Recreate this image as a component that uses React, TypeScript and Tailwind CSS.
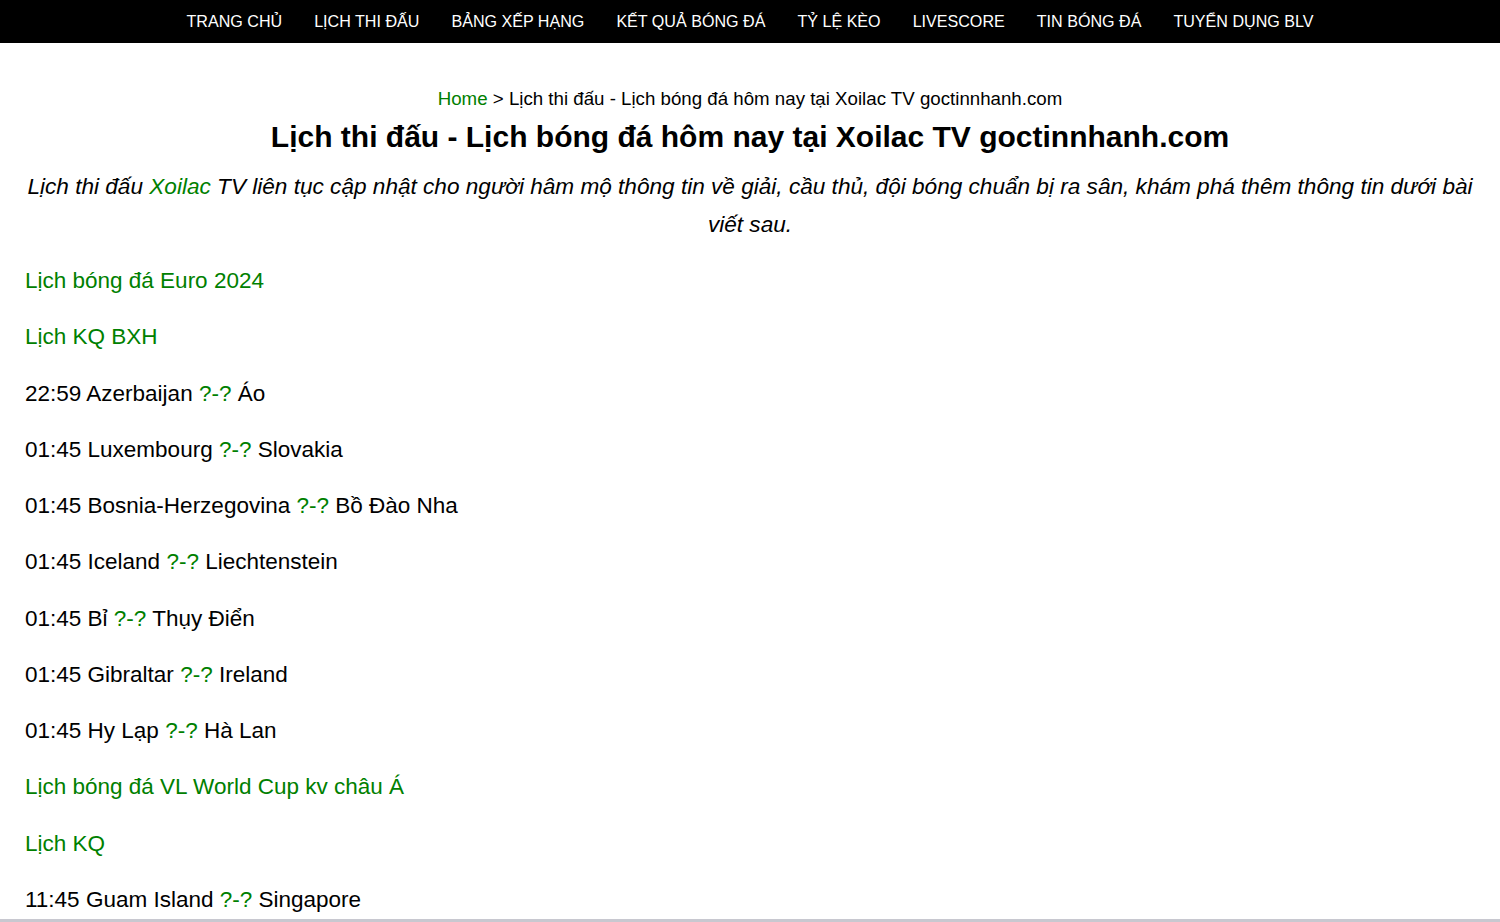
import React from 'react';

const navItems = [
  'Trang chủ',
  'Lịch thi đấu',
  'Bảng xếp hạng',
  'Kết quả bóng đá',
  'Tỷ lệ kèo',
  'Livescore',
  'Tin bóng đá',
  'Tuyển dụng BLV',
];

type Row =
  | { kind: 'link'; text: string }
  | { kind: 'match'; time: string; home: string; away: string };

const rows: Row[] = [
  { kind: 'link', text: 'Lịch bóng đá Euro 2024' },
  { kind: 'link', text: 'Lịch KQ BXH' },
  { kind: 'match', time: '22:59', home: 'Azerbaijan', away: 'Áo' },
  { kind: 'match', time: '01:45', home: 'Luxembourg', away: 'Slovakia' },
  { kind: 'match', time: '01:45', home: 'Bosnia-Herzegovina', away: 'Bồ Đào Nha' },
  { kind: 'match', time: '01:45', home: 'Iceland', away: 'Liechtenstein' },
  { kind: 'match', time: '01:45', home: 'Bỉ', away: 'Thụy Điển' },
  { kind: 'match', time: '01:45', home: 'Gibraltar', away: 'Ireland' },
  { kind: 'match', time: '01:45', home: 'Hy Lạp', away: 'Hà Lan' },
  { kind: 'link', text: 'Lịch bóng đá VL World Cup kv châu Á' },
  { kind: 'link', text: 'Lịch KQ' },
  { kind: 'match', time: '11:45', home: 'Guam Island', away: 'Singapore' },
];

export default function App() {
  return (
    <div className="min-h-screen bg-white text-black font-['Liberation_Sans',Arial,sans-serif]">
      {/* Top nav */}
      <nav className="h-[43px] bg-black flex items-center justify-center">
        <ul className="flex items-center">
          {navItems.map((item) => (
            <li key={item} className="px-4 text-[16.1px] uppercase text-white leading-none">
              {item}
            </li>
          ))}
        </ul>
      </nav>

      <main className="px-[25px] pt-[45px]">
        {/* Breadcrumb */}
        <div className="text-center text-[18.7px] leading-[22px]">
          <span className="text-[#008000]">Home</span> &gt; Lịch thi đấu - Lịch bóng đá hôm nay tại Xoilac TV goctinnhanh.com
        </div>

        <h1 className="mt-[4px] text-center text-[30px] font-bold leading-[46px]">
          Lịch thi đấu - Lịch bóng đá hôm nay tại Xoilac TV goctinnhanh.com
        </h1>

        <p className="mt-[8px] text-center text-[22.6px] italic leading-[38px]">
          Lịch thi đấu <span className="text-[#008000]">Xoilac</span> TV liên tục cập nhật cho người hâm mộ thông tin về giải, cầu thủ, đội bóng chuẩn bị ra sân, khám phá thêm thông tin dưới bài viết sau.
        </p>

        <div className="mt-[20px]">
          {rows.map((r, i) => (
            <p key={i} className="text-[22.5px] leading-[34.27px] mb-[22px]">
              {r.kind === 'link' ? (
                <span className="text-[#008000]">{r.text}</span>
              ) : (
                <>
                  {r.time} {r.home} <span className="text-[#008000]">?-?</span> {r.away}
                </>
              )}
            </p>
          ))}
        </div>
      </main>

      <div className="fixed bottom-0 left-0 right-0 h-[3px] bg-[#c8c8d0]" />
    </div>
  );
}
